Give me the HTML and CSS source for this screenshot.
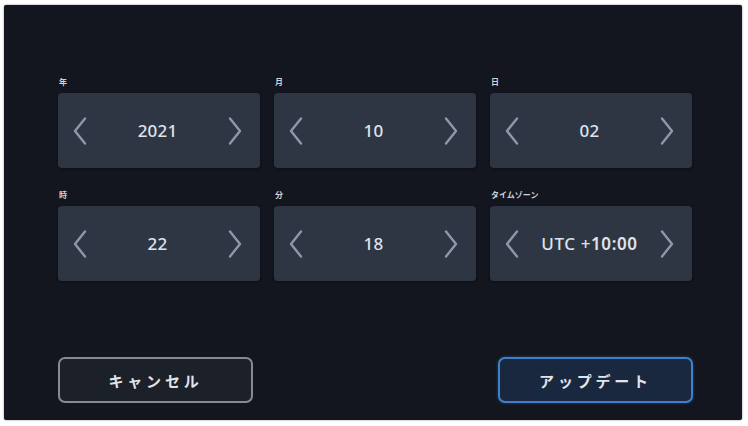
FILE: index.html
```html
<!DOCTYPE html>
<html lang="ja">
<head>
<meta charset="utf-8">
<link rel="stylesheet" href="styles.css">
</head>
<body>
<div class="screen">
  <div class="grid">
    <div class="field">
      <div class="label">年</div>
      <div class="spinner">
        <svg class="chev" viewBox="0 0 14 28"><polyline points="12,1.5 2,14 12,26.5"/></svg>
        <span class="value">2021</span>
        <svg class="chev" viewBox="0 0 14 28"><polyline points="2,1.5 12,14 2,26.5"/></svg>
      </div>
    </div>
    <div class="field">
      <div class="label">月</div>
      <div class="spinner">
        <svg class="chev" viewBox="0 0 14 28"><polyline points="12,1.5 2,14 12,26.5"/></svg>
        <span class="value">10</span>
        <svg class="chev" viewBox="0 0 14 28"><polyline points="2,1.5 12,14 2,26.5"/></svg>
      </div>
    </div>
    <div class="field">
      <div class="label">日</div>
      <div class="spinner">
        <svg class="chev" viewBox="0 0 14 28"><polyline points="12,1.5 2,14 12,26.5"/></svg>
        <span class="value">02</span>
        <svg class="chev" viewBox="0 0 14 28"><polyline points="2,1.5 12,14 2,26.5"/></svg>
      </div>
    </div>
    <div class="field">
      <div class="label">時</div>
      <div class="spinner">
        <svg class="chev" viewBox="0 0 14 28"><polyline points="12,1.5 2,14 12,26.5"/></svg>
        <span class="value">22</span>
        <svg class="chev" viewBox="0 0 14 28"><polyline points="2,1.5 12,14 2,26.5"/></svg>
      </div>
    </div>
    <div class="field">
      <div class="label">分</div>
      <div class="spinner">
        <svg class="chev" viewBox="0 0 14 28"><polyline points="12,1.5 2,14 12,26.5"/></svg>
        <span class="value">18</span>
        <svg class="chev" viewBox="0 0 14 28"><polyline points="2,1.5 12,14 2,26.5"/></svg>
      </div>
    </div>
    <div class="field">
      <div class="label">タイムゾーン</div>
      <div class="spinner tz">
        <svg class="chev" viewBox="0 0 14 28"><polyline points="12,1.5 2,14 12,26.5"/></svg>
        <span class="value">UTC +<b>10:00</b></span>
        <svg class="chev" viewBox="0 0 14 28"><polyline points="2,1.5 12,14 2,26.5"/></svg>
      </div>
    </div>
  </div>
  <div class="buttons">
    <button class="btn cancel">キャンセル</button>
    <button class="btn update">アップデート</button>
  </div>
</div>
</body>
</html>
```

FILE: styles.css
```css
html, body {
  margin: 0;
  padding: 0;
  background: #ffffff;
}
body {
  width: 748px;
  height: 426px;
  overflow: hidden;
  font-family: "Noto Sans", "Noto Sans CJK JP", sans-serif;
}
.screen {
  box-sizing: border-box;
  margin: 5px 0 0 4px;
  width: 738px;
  height: 415px;
  background: #13161e;
  border-radius: 2px;
  box-shadow: 0 0 2px rgba(0,0,0,0.5);
  padding: 72px 0 17px 54px;
  display: flex;
  flex-direction: column;
}
.grid {
  display: grid;
  grid-template-columns: 202px 202px 202px;
  column-gap: 14px;
  row-gap: 22px;
}
.field {
  display: flex;
  flex-direction: column;
}
.label {
  font-family: "Noto Sans CJK JP", sans-serif;
  font-size: 8px;
  line-height: 10px;
  height: 10px;
  font-weight: 700;
  color: #cfd3da;
  margin-bottom: 6px;
  padding-left: 1px;
}
.spinner {
  height: 75px;
  background: #2e3644;
  border-radius: 4px;
  box-shadow: 0 1px 3px rgba(0,0,0,0.35);
  display: flex;
  align-items: center;
  justify-content: space-between;
  padding: 0 18px 0 15px;
}
.chev {
  width: 14px;
  height: 28px;
  fill: none;
  stroke: #8f98a8;
  stroke-width: 2.4;
  stroke-linecap: round;
  stroke-linejoin: round;
}
.value {
  font-family: "Noto Sans", sans-serif;
  font-size: 17px;
  font-weight: 500;
  color: #dfe3ea;
  letter-spacing: 0.2px;
}
.value b {
  font-weight: 600;
}
.tz .value {
  font-size: 17px;
  letter-spacing: 0.6px;
}
.buttons {
  margin-top: auto;
  width: 635px;
  display: flex;
  justify-content: space-between;
}
.btn {
  box-sizing: border-box;
  width: 195px;
  height: 46px;
  border-radius: 7px;
  font-family: "Noto Sans CJK JP", sans-serif;
  font-size: 15px;
  font-weight: 700;
  letter-spacing: 3.8px;
  color: #e1e4ea;
  padding: 0;
  cursor: pointer;
}
.cancel {
  background: #1c2029;
  border: 2px solid #858a94;
}
.update {
  background: #19273f;
  border: 2px solid #3f7fcc;
  box-shadow: 0 0 3px rgba(63,127,204,0.5);
}
```
